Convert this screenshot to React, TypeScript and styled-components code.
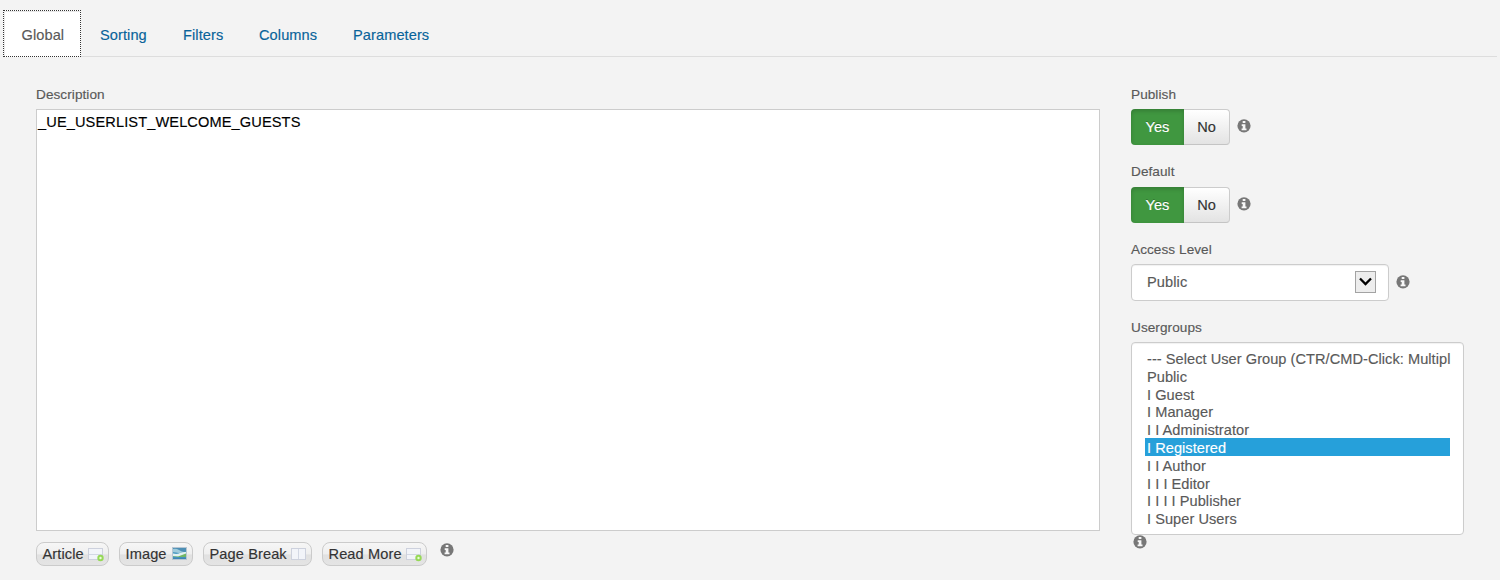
import React from "react";
import styled, { createGlobalStyle, css } from "styled-components";

const GlobalStyle = createGlobalStyle`
  * { box-sizing: border-box; }
  body {
    margin: 0;
    background: #f3f3f3;
    color: #595959;
    font-family: "Liberation Sans", Arial, sans-serif;
    font-size: 14.6px;
    -webkit-text-stroke: 0.15px currentColor;
  }
`;

const Page = styled.div`
  width: 1500px;
  height: 580px;
  overflow: hidden;
  padding: 10px 3px 0;
`;

const TabBar = styled.nav`
  display: flex;
  height: 47px;
  box-shadow: inset 0 -1px 0 #ddd;
`;

const Tab = styled.a<{ $width: number; $active?: boolean }>`
  width: ${(p) => p.$width}px;
  height: 47px;
  padding-left: 18px;
  line-height: 50px;
  letter-spacing: 0.08px;
  color: #08639a;
  white-space: nowrap;
  ${(p) =>
    p.$active &&
    css`
      color: #595959;
      background: #fff;
      border: 1px dotted #333;
      padding-left: 17.5px;
      line-height: 48px;
      margin-right: 1px;
      box-shadow: inset 1px 1px 0 #e9e9e9;
    `}
`;

const Content = styled.main`
  display: flex;
  padding: 27px 33px 0;
`;

const EditorColumn = styled.section`
  width: 1064px;
  margin-right: 31px;
`;

const SideColumn = styled.aside`
  width: 333px;
`;

const Label = styled.label<{ $height?: number; $drop?: number }>`
  display: block;
  height: ${(p) => p.$height ?? 25}px;
  line-height: ${(p) => 20 + (p.$drop ?? 0) * 2}px;
  font-size: 13.6px;
  letter-spacing: 0.06px;
  white-space: nowrap;
`;

const TextArea = styled.div`
  height: 422px;
  border: 1px solid #ccc;
  background: #fff;
  color: #000;
  padding: 3px 0 0 1px;
  line-height: 18px;
  letter-spacing: 0.11px;
`;

const EditorButtons = styled.div`
  display: flex;
  margin-top: 11px;
`;

const EditorButton = styled.button<{ $width: number; $gap: number }>`
  display: flex;
  align-items: center;
  justify-content: space-between;
  width: ${(p) => p.$width}px;
  height: 24px;
  margin: 0 ${(p) => p.$gap}px 0 0;
  padding: 0 4px 0 5.5px;
  border: 1px solid #cbcbcb;
  border-radius: 8px;
  background: linear-gradient(#f6f6f6 0%, #efefef 48%, #e1e1e1 55%, #e4e4e4 100%);
  color: #333;
  font: 14.6px "Liberation Sans", Arial, sans-serif;
  letter-spacing: 0.1px;
  white-space: nowrap;
`;

const Field = styled.div<{ $height: number }>`
  height: ${(p) => p.$height}px;
`;

const Control = styled.div<{ $gap?: number; $indent?: number }>`
  display: flex;
  gap: ${(p) => p.$gap ?? 0}px;
  padding-left: ${(p) => p.$indent ?? 0}px;
`;

const Toggle = styled.div`
  display: flex;
  width: 99px;
  height: 36px;
  line-height: 37px;
  text-align: center;
`;

const YesButton = styled.span`
  width: 53px;
  border-radius: 4px 0 0 4px;
  background: #409740;
  color: #fff;
  box-shadow: inset 0 2px 4px rgba(0, 0, 0, 0.18);
  text-shadow: 0 -1px 0 rgba(0, 0, 0, 0.25);
`;

const NoButton = styled.span`
  width: 46px;
  border: 1px solid #ccc;
  border-left: 0;
  border-bottom-color: #c4c4c4;
  border-radius: 0 4px 4px 0;
  background: linear-gradient(#fff, #e3e3e3);
  color: #333;
  line-height: 35px;
`;

const InfoSvg = styled.svg<{ $top: number }>`
  display: block;
  flex: none;
  margin-top: ${(p) => p.$top}px;
`;

const SelectBox = styled.div`
  display: flex;
  justify-content: space-between;
  width: 258px;
  height: 37px;
  padding: 6px 12px 0 15px;
  border: 1px solid #ccc;
  border-radius: 4px;
  background: #fff;
  box-shadow: inset 0 1px 1px rgba(0, 0, 0, 0.06);
  line-height: 23px;
  letter-spacing: 0.1px;
`;

const Arrow = styled.span`
  width: 21px;
  height: 22px;
  border: 1px solid #a3a3a3;
  background: #ededed;
`;

const List = styled.ul`
  width: 333px;
  height: 193px;
  margin: 0;
  padding: 6px 13px 0;
  border: 1px solid #ccc;
  border-radius: 4px;
  background: #fff;
  box-shadow: inset 0 1px 1px rgba(0, 0, 0, 0.06);
  list-style: none;
`;

const Option = styled.li<{ $selected?: boolean }>`
  height: 17.8px;
  padding-left: 2px;
  line-height: 20px;
  letter-spacing: 0.04px;
  white-space: pre;
  ${(p) =>
    p.$selected &&
    css`
      background: #26a0da;
      color: #fff;
    `}
`;

const Info = ({ top = 0 }: { top?: number }) => (
  <InfoSvg $top={top} width="14" height="14" viewBox="0 0 14 14">
    <circle cx="7" cy="6.8" r="6.6" fill="#777" />
    <path d="M5.7 2h2.7v2.1H5.7zM4.7 5.2h3.7v4.4h1.1v1.7H4.6V9.6h1.1V6.9h-1z" fill="#f7f7f7" />
  </InfoSvg>
);

const PanelIcon = ({ kind }: { kind: "add" | "split" | "image" }) => (
  <svg width="16" height="16" viewBox="0 0 16 16">
    {kind === "image" ? (
      <>
        <rect x=".5" y="1.5" width="14" height="12" fill="#4b9cc5" stroke="#b7c6d2" />
        <path d="M1 2h13v3L9 8 1 6z" fill="#4d8fb5" />
        <path d="M1 3q3-1 6 1t5 2L7 7 1 6z" fill="#9ecbdc" />
        <path d="M1 7.5q4 1 7-.5t6-1v3l-7 2-6-1z" fill="#e2f1f0" />
        <path d="M1 10.5h5l8-3v3.5H1z" fill="#72b666" />
        <path d="M1 11.5h13V13H1z" fill="#3f86b4" />
      </>
    ) : (
      <>
        <rect x=".5" y="2.5" width="14" height="11" fill="#f2f4f9" stroke="#cdd1dd" />
        <path d={kind === "split" ? "M7.5 3v10" : "M1 8.5h13"} stroke="#d3d8e4" />
      </>
    )}
    {kind === "add" && (
      <>
        <circle cx="12.5" cy="12" r="3.2" fill="#96d957" />
        <circle cx="12.5" cy="12" r="1.2" fill="#eafbd9" />
      </>
    )}
  </svg>
);

const YesNo = () => (
  <Toggle>
    <YesButton>Yes</YesButton>
    <NoButton>No</NoButton>
  </Toggle>
);

const groups = [
  "--- Select User Group (CTR/CMD-Click: Multipl",
  "Public",
  "I Guest",
  "I Manager",
  "I I Administrator",
  "I Registered",
  "I I Author",
  "I I I Editor",
  "I I I I Publisher",
  "I Super Users",
];

export default function App() {
  return (
    <Page>
      <GlobalStyle />
      <TabBar>
        <Tab $width={78} $active>Global</Tab>
        <Tab $width={83}>Sorting</Tab>
        <Tab $width={76}>Filters</Tab>
        <Tab $width={94}>Columns</Tab>
        <Tab $width={112}>Parameters</Tab>
      </TabBar>
      <Content>
        <EditorColumn>
          <Label $drop={1}>Description</Label>
          <TextArea>_UE_USERLIST_WELCOME_GUESTS</TextArea>
          <EditorButtons>
            <EditorButton $width={73} $gap={10}>Article<PanelIcon kind="add" /></EditorButton>
            <EditorButton $width={74} $gap={10}>Image<PanelIcon kind="image" /></EditorButton>
            <EditorButton $width={109} $gap={10}>Page Break<PanelIcon kind="split" /></EditorButton>
            <EditorButton $width={105} $gap={13}>Read More<PanelIcon kind="add" /></EditorButton>
            <Info top={1} />
          </EditorButtons>
        </EditorColumn>
        <SideColumn>
          <Field $height={78}>
            <Label $drop={1}>Publish</Label>
            <Control $gap={7}><YesNo /><Info top={10} /></Control>
          </Field>
          <Field $height={78}>
            <Label>Default</Label>
            <Control $gap={7}><YesNo /><Info top={10} /></Control>
          </Field>
          <Field $height={78}>
            <Label $height={24}>Access Level</Label>
            <Control $gap={7}>
              <SelectBox>
                Public
                <Arrow>
                  <svg width="19" height="20" viewBox="0 0 19 20">
                    <path d="M4 6.5l5.5 5.5L15 6.5" fill="none" stroke="#000" strokeWidth="2.3" />
                  </svg>
                </Arrow>
              </SelectBox>
              <Info top={11} />
            </Control>
          </Field>
          <Label $height={24}>Usergroups</Label>
          <List>
            {groups.map((name) => (
              <Option key={name} $selected={name === "I Registered"}>{name}</Option>
            ))}
          </List>
          <Control $indent={2}><Info /></Control>
        </SideColumn>
      </Content>
    </Page>
  );
}
